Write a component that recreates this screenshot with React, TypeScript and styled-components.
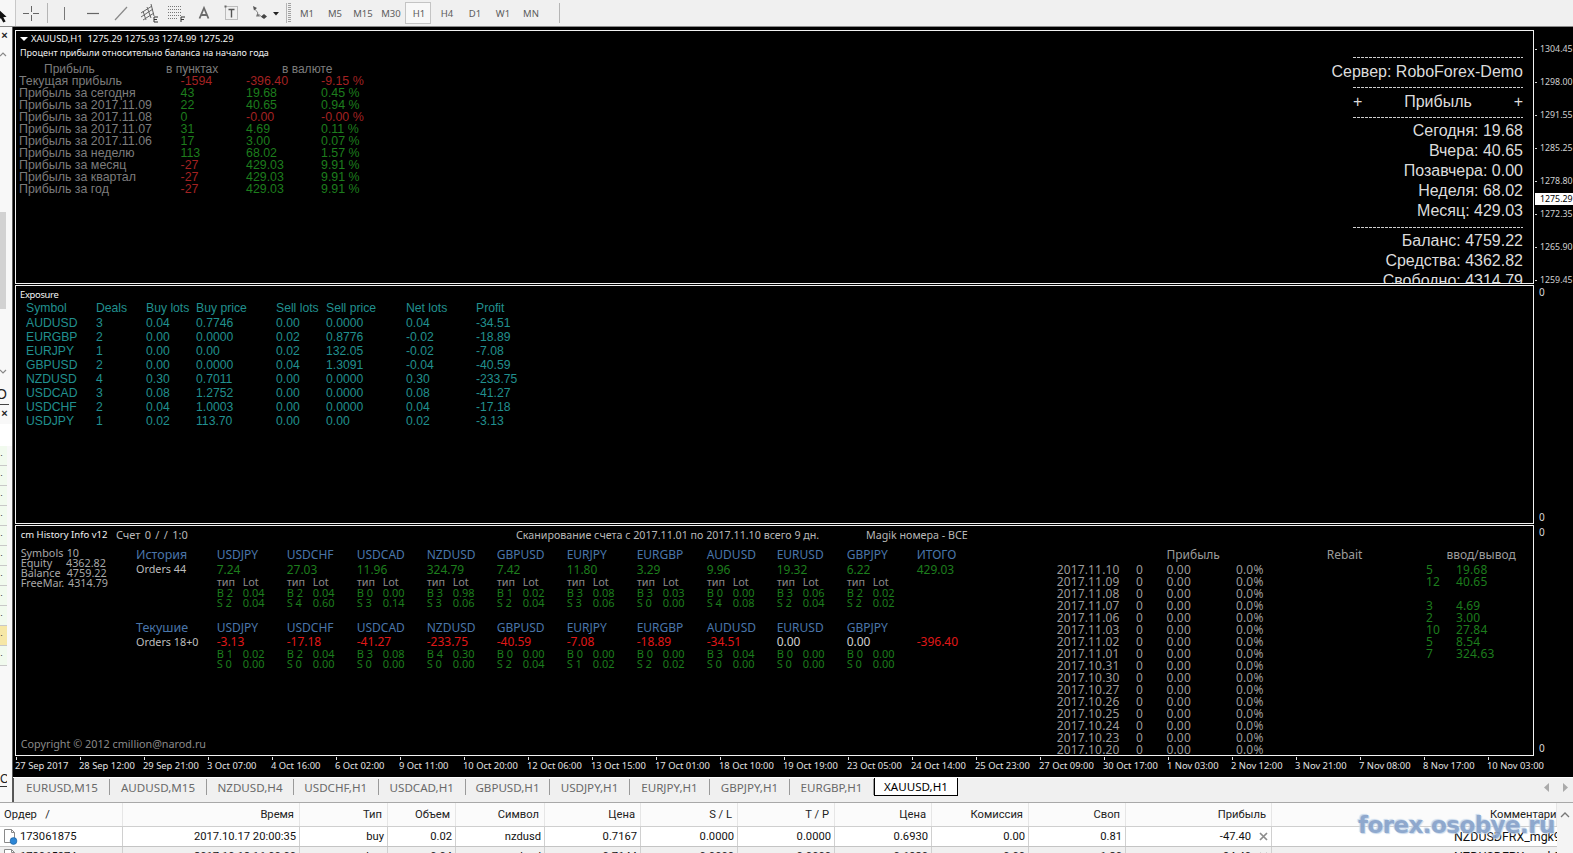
import React from "react";
import styled, { createGlobalStyle } from "styled-components";

const Global = createGlobalStyle`
  html, body { margin: 0; padding: 0; background: #f0f0f0; overflow: hidden; }
  #root { width: 1573px; height: 853px; overflow: hidden; }
`;

const UI = `"Noto Sans", "Liberation Sans", sans-serif`;
const ARIAL = `"Liberation Sans", Arial, sans-serif`;
const GREEN = "#1d7d1d";
const DARKRED = "#a32222";

const Page = styled.div`
  width: 1573px;
  height: 853px;
  display: flex;
  flex-direction: column;
  overflow: hidden;
  position: relative;
  font-family: ${UI};
`;

/* ---------- toolbar ---------- */
const Toolbar = styled.div`
  height: 26px;
  border-bottom: 1px solid #8a8a8a;
  background: #f0f0f0;
  display: flex;
  align-items: center;
  flex: none;
`;
const ToolButton = styled.div<{ $w: number; $on?: boolean }>`
  width: ${(p) => p.$w}px;
  height: 26px;
  flex: none;
  display: flex;
  align-items: center;
  justify-content: center;
  box-sizing: border-box;
  background: ${(p) => (p.$on ? "#f7f7f7" : "transparent")};
  border-right: ${(p) => (p.$on ? "1px solid #c8c8c8" : "0")};
`;
const ToolSep = styled.div<{ $ml?: number }>`
  width: 1px;
  height: 20px;
  background: #b5b5b5;
  margin-left: ${(p) => p.$ml ?? 0}px;
  flex: none;
`;
const Grip = styled.div`
  width: 3px;
  height: 20px;
  margin: 0 2px 0 1px;
  flex: none;
  background: repeating-linear-gradient(to bottom, #a0a0a0 0 1px, transparent 1px 2px);
`;
const TfButton = styled.div<{ $on?: boolean }>`
  width: 28px;
  height: 26px;
  flex: none;
  display: flex;
  align-items: center;
  justify-content: center;
  font-size: 9.5px;
  color: #5c5c5c;
  position: relative;
  z-index: 0;
  ${(p) =>
    p.$on
      ? `&::before{content:"";position:absolute;z-index:-1;left:0;right:2px;top:2px;bottom:2px;background:#f8f8f8;border:1px solid #c4c4c4;box-sizing:border-box;}`
      : ""}
`;

/* ---------- middle ---------- */
const Middle = styled.div`
  display: flex;
  flex: none;
  height: 775px;
`;
const Sidebar = styled.div`
  width: 12px;
  flex: none;
  background: #f8f8f8;
  border-right: 1px solid #5a5a5a;
  display: flex;
  flex-direction: column;
  overflow: hidden;
  color: #222;
`;
const SideClose = styled.div`
  height: 17px;
  font: bold 11px/17px ${ARIAL};
  text-align: center;
  width: 9px;
  flex: none;
`;
const SideChevron = styled.div<{ $mt: number }>`
  height: 9px;
  margin-top: ${(p) => p.$mt}px;
  flex: none;
  display: flex;
  justify-content: flex-start;
`;
const SideThumb = styled.div`
  width: 6px;
  height: 97px;
  margin-top: 153px;
  background: #d2d2d2;
  flex: none;
`;
const SideLetter = styled.div`
  height: 15px;
  font: 14px/15px ${ARIAL};
  margin-top: 11px;
  margin-left: -4px;
  color: #222;
  flex: none;
`;
const SideRule = styled.div<{ $mt?: number }>`
  height: 1px;
  background: #444;
  margin-top: ${(p) => p.$mt ?? 0}px;
  margin-right: 3px;
  flex: none;
`;
const SideGap = styled.div<{ $h: number; $bg?: string }>`
  height: ${(p) => p.$h}px;
  flex: none;
  background: ${(p) => p.$bg ?? "transparent"};
`;
const ListRow = styled.div<{ $bg: string }>`
  height: 19px;
  border-bottom: 1px solid #c8c8c8;
  background: ${(p) => p.$bg};
  width: 7px;
  flex: none;
  font: 9px/19px ${ARIAL};
  color: #333;
`;
const SideTab = styled.div`
  height: 14px;
  font: 12px/14px ${ARIAL};
  color: #222;
  border-bottom: 1px solid #333;
  width: 7px;
  overflow: hidden;
  flex: none;
  margin-top: auto;
  margin-bottom: 15px;
`;

const RightCol = styled.div`
  flex: 1;
  display: flex;
  flex-direction: column;
  min-width: 0;
`;
const Workspace = styled.div`
  height: 751px;
  flex: none;
  box-sizing: border-box;
  background: #000;
  padding: 3px 0 0 2px;
  display: flex;
  flex-direction: column;
  gap: 1px;
`;
const ChartRow = styled.div<{ $h: number }>`
  height: ${(p) => p.$h}px;
  display: flex;
  flex: none;
`;
const Panel = styled.div`
  width: 1519px;
  flex: none;
  box-sizing: border-box;
  border: 1px solid #f2f2f2;
  background: #000;
  overflow: hidden;
  display: flex;
  position: relative;
`;

/* price scale */
const Scale = styled.div`
  flex: 1;
  position: relative;
  box-sizing: border-box;
  padding-top: 3px;
  color: #d0d0d0;
  font: 8.8px ${UI};
`;
const PriceLabel = styled.div`
  height: 33px;
  line-height: 33px;
  padding-left: 6px;
  position: relative;
  white-space: nowrap;
  &::before {
    content: "";
    position: absolute;
    left: 1px;
    top: 16px;
    width: 2px;
    height: 1px;
    background: #d0d0d0;
  }
`;
const PriceNow = styled.div`
  position: absolute;
  left: 1px;
  right: 0;
  top: 163px;
  height: 12px;
  background: #fff;
  color: #000;
  font: 8.8px/12px ${UI};
  padding-left: 5px;
  white-space: nowrap;
`;
const ZeroScale = styled.div<{ $pt: number; $pb: number }>`
  flex: 1;
  box-sizing: border-box;
  padding: ${(p) => p.$pt}px 0 ${(p) => p.$pb}px 5px;
  display: flex;
  flex-direction: column;
  justify-content: space-between;
  color: #d8d8d8;
  font: 10px/12px ${UI};
`;

/* panel 1 */
const ProfitSide = styled.div`
  flex: 1;
  padding: 1px 0 0 3px;
`;
const ChartTitle = styled.div`
  height: 14px;
  font: 9.4px/14px ${UI};
  color: #f4f4f4;
  white-space: pre;
  display: flex;
  align-items: center;
`;
const TitleArrow = styled.span`
  width: 0;
  height: 0;
  border-left: 4px solid transparent;
  border-right: 4px solid transparent;
  border-top: 4px solid #fff;
  margin: 0 3px 0 1px;
`;
const Subtitle = styled.div`
  height: 13px;
  font: 9px/13px ${UI};
  color: #f0f0f0;
  white-space: pre;
  padding-left: 1px;
`;
const ProfitHead = styled.div`
  display: grid;
  grid-template-columns: 122px 116px 100px;
  margin: 4px 0 0 25px;
  height: 12px;
  font: 12px/12px ${ARIAL};
  color: #7c7c7c;
`;
const ProfitGrid = styled.div`
  display: grid;
  grid-template-columns: 161.5px 65.5px 75px 80px;
  grid-auto-rows: 12px;
  font: 12.4px/12px ${ARIAL};
`;
const ProfitCell = styled.div<{ $c: string }>`
  color: ${(p) => p.$c};
  white-space: pre;
`;
const Summary = styled.div`
  width: 170px;
  margin-right: 10px;
  padding-top: 21px;
  flex: none;
  font: 16px/20px ${ARIAL};
  color: #dcdcdc;
`;
const SumDash = styled.div<{ $mt?: number; $mb?: number }>`
  height: 10px;
  margin-top: ${(p) => p.$mt ?? 0}px;
  margin-bottom: ${(p) => p.$mb ?? 0}px;
  position: relative;
  &::after {
    content: "";
    position: absolute;
    left: 0;
    right: 0;
    top: 5px;
    height: 1px;
    background: repeating-linear-gradient(to right, #cfcfcf 0 3px, transparent 3px 4px);
  }
`;
const SumLine = styled.div`
  height: 20px;
  white-space: pre;
  display: flex;
  justify-content: flex-end;
`;
const SumHead = styled.div`
  height: 20px;
  display: flex;
  align-items: center;
  justify-content: space-between;
`;

/* panel 2 */
const ExposureBody = styled.div`
  flex: 1;
  padding: 2px 0 0 4px;
`;
const MiniTitle = styled.div`
  height: 13px;
  font: 9.4px/14px ${UI};
  letter-spacing: -0.3px;
  color: #f4f4f4;
`;
const ExposureGrid = styled.div`
  display: grid;
  grid-template-columns: 70px 50px 50px 80px 50px 80px 70px 80px;
  grid-template-rows: 15px;
  grid-auto-rows: 14px;
  margin-left: 6px;
  font: 12.2px/14px ${ARIAL};
  color: #21908f;
`;

/* panel 3 */
const HistoryPanel = styled.div`
  flex: 1;
  display: flex;
  flex-direction: column;
  min-width: 0;
`;
const HistoryHeader = styled.div`
  display: grid;
  grid-template-columns: 95.3px 400px 350px 120px;
  height: 14px;
  margin-top: 2px;
  padding-left: 4.7px;
  font: 10.7px/14px ${UI};
  color: #b8b8b8;
  flex: none;
  white-space: nowrap;
`;
const HistoryApp = styled.div`
  color: #f2f2f2;
  font-size: 9.5px;
`;
const AccountTitle = styled.div`
  font-size: 11px;
  word-spacing: 1.5px;
`;
const HistoryBody = styled.div`
  flex: 1;
  display: flex;
  min-height: 0;
  padding: 6px 0 0 4.7px;
`;
const LeftPart = styled.div`
  width: 1036px;
  flex: none;
  display: flex;
  flex-direction: column;
`;
const TopPart = styled.div`
  display: flex;
  flex: 1;
`;
const AccountBlock = styled.div`
  width: 115.3px;
  flex: none;
`;
const AccountLine = styled.div<{ $col: number }>`
  display: grid;
  grid-template-columns: ${(p) => p.$col}px auto;
  height: 10px;
  font: 10.8px/10px ${UI};
  color: #a8a8a8;
`;
const Groups = styled.div`
  display: flex;
  flex-direction: column;
  gap: 13px;
`;
const OrderGroup = styled.div`
  display: flex;
`;
const GroupLead = styled.div`
  width: 80.7px;
  flex: none;
`;
const LeadTitle = styled.div`
  height: 14px;
  font: 12.5px/14px ${UI};
  color: #4a76aa;
`;
const LeadSub = styled.div`
  height: 14px;
  font: 10.8px/14px ${UI};
  color: #bdbdbd;
`;
const SymColumn = styled.div`
  width: 70px;
  flex: none;
`;
const SymName = styled.div`
  height: 14px;
  font: 12px/14px ${UI};
  color: #4a76aa;
`;
const SymValue = styled.div<{ $c: string; $h: number }>`
  height: ${(p) => p.$h}px;
  font: 12px/${(p) => p.$h}px ${UI};
  color: ${(p) => p.$c};
`;
const TypeRow = styled.div`
  display: grid;
  grid-template-columns: 26px auto;
  height: 12px;
  margin-top: -1px;
  font: 10.8px/12px ${UI};
  color: #8c8c8c;
`;
const TradeRow = styled.div`
  display: grid;
  grid-template-columns: 26px auto;
  height: 10px;
  font: 11px/10px ${UI};
  color: ${GREEN};
`;
const Copyright = styled.div`
  height: 14px;
  margin-bottom: 4px;
  font: 10.8px/14px ${UI};
  color: #8a8a8a;
  flex: none;
`;
const DayTable = styled.div`
  display: grid;
  grid-template-columns: 79.3px 30.5px 69.5px 90.7px 99.3px 30px 80px;
  grid-template-rows: 16px;
  grid-auto-rows: 12px;
  font: 12px/14px ${UI};
  color: #9c9c9c;
  flex: none;
`;
const DayHead = styled.div<{ $span?: number; $pl?: number }>`
  grid-column: span ${(p) => p.$span ?? 1};
  padding-left: ${(p) => p.$pl ?? 0}px;
  white-space: nowrap;
`;
const DayCell = styled.div<{ $green?: boolean }>`
  color: ${(p) => (p.$green ? GREEN : "#9c9c9c")};
  letter-spacing: 0.15px;
  line-height: 12px;
`;

/* time axis */
const AxisRow = styled.div`
  display: flex;
  height: 20px;
  margin-left: -2px;
  padding-left: 2px;
  border-bottom: 1px solid #fff;
  flex: none;
  overflow: hidden;
`;
const AxisItem = styled.div`
  width: 64px;
  flex: none;
  box-sizing: border-box;
  position: relative;
  padding-top: 3px;
  font: 9.4px/12px ${UI};
  color: #e2e2e2;
  white-space: nowrap;
  &::before {
    content: "";
    position: absolute;
    left: 1px;
    top: 0;
    width: 1px;
    height: 3px;
    background: #e2e2e2;
  }
`;

/* tabs */
const TabBar = styled.div`
  height: 24px;
  flex: none;
  background: #f0f0f0;
  display: flex;
  padding-left: 1px;
  position: relative;
  border-left: 1px solid #555;
`;
const Tab = styled.div<{ $w: number; $active?: boolean }>`
  width: ${(p) => p.$w}px;
  flex: none;
  box-sizing: border-box;
  height: ${(p) => (p.$active ? "18px" : "16px")};
  margin-top: ${(p) => (p.$active ? "0" : "1px")};
  display: flex;
  align-items: center;
  justify-content: center;
  font-size: 11.6px;
  color: ${(p) => (p.$active ? "#000" : "#6a6a6a")};
  background: ${(p) => (p.$active ? "#fff" : "transparent")};
  border-right: 1px solid ${(p) => (p.$active ? "#000" : "#9a9a9a")};
  ${(p) => (p.$active ? "border-left:1px solid #000;border-bottom:1px solid #000;" : "")}
`;
const TabArrows = styled.div`
  position: absolute;
  right: 5px;
  top: 5px;
  display: flex;
  gap: 14px;
`;

/* orders */
const TABLE_FONT = `Roboto, "Noto Sans", sans-serif`;
const OrdersTable = styled.div`
  flex: none;
  height: 51px;
  background: #fff;
  overflow: hidden;
  display: flex;
  border-top: 1px solid #a8a8a8;
  box-sizing: border-box;
  font-family: ${TABLE_FONT};
`;
const OrdersMain = styled.div`
  width: 1557px;
  flex: none;
  overflow: hidden;
`;
const Tr = styled.div<{ $h: number; $bg: string; $line: string }>`
  display: grid;
  grid-template-columns: 123px 177px 88px 68px 89px 96px 97px 97px 97px 97px 97px 146px 285px;
  height: ${(p) => p.$h}px;
  box-sizing: border-box;
  background: ${(p) => p.$bg};
  border-bottom: 1px solid ${(p) => p.$line};
`;
const Th = styled.div<{ $pl?: number }>`
  box-sizing: border-box;
  border-right: 1px solid #e6e6e6;
  font-size: 11.2px;
  line-height: 23px;
  color: #222;
  text-align: ${(p) => (p.$pl !== undefined ? "left" : "right")};
  padding: ${(p) => (p.$pl !== undefined ? `0 0 0 ${p.$pl}px` : "0 5px 0 0")};
  white-space: nowrap;
  overflow: hidden;
`;
const Td = styled.div`
  box-sizing: border-box;
  border-right: 1px solid #d0d0d0;
  font-size: 11.2px;
  line-height: 19px;
  color: #111;
  padding-right: 3px;
  white-space: nowrap;
  overflow: hidden;
  display: flex;
  justify-content: flex-end;
  align-items: center;
  gap: 8px;
`;
const TdId = styled(Td)`
  justify-content: flex-start;
  padding-left: 2px;
  gap: 2px;
`;
const TdComment = styled(Td)`
  justify-content: flex-start;
  padding-left: 182px;
  font-size: 12.4px;
  border-right: 0;
`;
const ScrollCol = styled.div`
  width: 16px;
  flex: 1;
  background: #f4f4f4;
  display: flex;
  justify-content: center;
  padding-top: 8px;
  box-sizing: border-box;
`;
const Watermark = styled.div`
  position: absolute;
  left: 1358px;
  top: 810px;
  font: bold 23px/30px "DejaVu Sans", sans-serif;
  letter-spacing: -0.55px;
  color: #86a2ca;
  opacity: 0.92;
  text-shadow: 1px 1px 1px #c4d6ea, -1px -1px 1px #c4d6ea;
  white-space: nowrap;
`;

/* ---------- icons ---------- */
const I = ({ w = 18, h = 18, children }: { w?: number; h?: number; children: React.ReactNode }) => (
  <svg width={w} height={h} viewBox={`0 0 ${w} ${h}`} fill="none" stroke="#777" strokeWidth="1">
    {children}
  </svg>
);

const IconCursor = () => (
  <svg width="16" height="26" viewBox="0 0 16 26">
    <path d="M-3 8 L7 17 L3.5 17.5 L6 22 L3.5 23 L1 18.5 L-3 21 Z" fill="#111" />
  </svg>
);
const IconCross = () => (
  <I>
    <path d="M1 9.5h6M11 9.5h6M9.5 2v6M9.5 11v6" stroke="#666" />
  </I>
);
const IconVLine = () => (
  <I>
    <path d="M9.5 3v13" stroke="#777" />
  </I>
);
const IconHLine = () => (
  <I>
    <path d="M3 9.5h12" stroke="#666" strokeWidth="1.2" />
  </I>
);
const IconTrend = () => (
  <I w={16} h={18}>
    <path d="M2 16L14 3" stroke="#888" strokeWidth="1.2" />
  </I>
);
const IconChannel = () => (
  <svg width="20" height="20" viewBox="0 0 20 20" fill="none" stroke="#666">
    <path d="M1 10L12 3M1 14L13 6M3 17L14 10M3 8l3 9M7 4l4 11M11 1l3 12" />
    <path d="M14 14h4M14 14v5M14 16.5h3M14 19h4" stroke="#333" />
  </svg>
);
const IconFibo = () => (
  <svg width="20" height="20" viewBox="0 0 20 20" fill="none" stroke="#777" strokeDasharray="1 1">
    <path d="M1 3.5h13M1 6.5h13M1 9.5h13M1 12.5h13M1 15.5h10" />
    <path d="M14 14h4M14 14v5M14 16.5h3" stroke="#333" strokeDasharray="none" />
  </svg>
);
const IconA = () => (
  <svg width="14" height="16" viewBox="0 0 14 16" fill="none" stroke="#6c6c6c" strokeWidth="1.8">
    <path d="M2.5 13.5L7 3l4.5 10.5M4 10h6" />
  </svg>
);
const IconT = () => (
  <svg width="16" height="18" viewBox="0 0 16 18" fill="none">
    <rect x="1.5" y="2.5" width="12" height="13" stroke="#888" strokeDasharray="1 1" />
    <rect x="0.5" y="1.5" width="2" height="2" fill="#666" />
    <path d="M4.5 5.5h6M7.5 5.5v8" stroke="#555" strokeWidth="1.4" />
  </svg>
);
const IconArrows = () => (
  <svg width="32" height="18" viewBox="0 0 32 18">
    <path d="M10 9L6 4" stroke="#888" fill="none" />
    <path d="M5 2l4 2-3 2.5z" fill="#555" />
    <path d="M15 14l-4-3.5" stroke="#888" fill="none" />
    <path d="M9.5 8.5l2.5 4-4 0z" fill="#777" />
    <path d="M16 10l3 2.5-3 2.5-3-2.5z" fill="#444" />
    <path d="M25 8h6l-3 3.5z" fill="#222" />
  </svg>
);
const IconChevron = ({ up }: { up?: boolean }) => (
  <svg width="7" height="9" viewBox="0 0 7 9" fill="none" stroke="#888" strokeWidth="1.2">
    <path d={up ? "M0 6l3-3 3 3" : "M0 3l3 3 3-3"} />
  </svg>
);
const IconDoc = () => (
  <svg width="16" height="17" viewBox="0 0 16 17" fill="none">
    <path d="M2.5 1.5h7l3 3v10h-10z" fill="#fff" stroke="#8a8a8a" />
    <path d="M9.5 1.5v3h3" stroke="#8a8a8a" />
    <circle cx="11.5" cy="13" r="3.4" fill="#2c86d6" stroke="#1a5d9a" strokeWidth="0.6" />
  </svg>
);
const IconX = () => (
  <svg width="9" height="9" viewBox="0 0 9 9" stroke="#8c8c8c" strokeWidth="1.7">
    <path d="M1 1l7 7M8 1l-7 7" />
  </svg>
);
const IconTri = ({ dir }: { dir: "l" | "r" }) => (
  <svg width="5" height="9" viewBox="0 0 5 9">
    <path d={dir === "l" ? "M5 0v9L0 4.5z" : "M0 0v9l5-4.5z"} fill="#aaa" />
  </svg>
);
const IconCaret = () => (
  <svg width="10" height="8" viewBox="0 0 10 8" fill="none" stroke="#777" strokeWidth="1.3">
    <path d="M1 6l4-4 4 4" />
  </svg>
);

/* ---------- data ---------- */
const TF = ["M1", "M5", "M15", "M30", "H1", "H4", "D1", "W1", "MN"];
const PRICES = ["1304.45", "1298.00", "1291.55", "1285.25", "1278.80", "1272.35", "1265.90", "1259.45"];

type ProfitRow = [string, string, string, string, boolean, boolean, boolean];
const PROFIT: ProfitRow[] = [
  ["Текущая прибыль", "-1594", "-396.40", "-9.15 %", false, false, false],
  ["Прибыль за сегодня", "43", "19.68", "0.45 %", true, true, true],
  ["Прибыль за 2017.11.09", "22", "40.65", "0.94 %", true, true, true],
  ["Прибыль за 2017.11.08", "0", "-0.00", "-0.00 %", true, false, false],
  ["Прибыль за 2017.11.07", "31", "4.69", "0.11 %", true, true, true],
  ["Прибыль за 2017.11.06", "17", "3.00", "0.07 %", true, true, true],
  ["Прибыль за неделю", "113", "68.02", "1.57 %", true, true, true],
  ["Прибыль за месяц", "-27", "429.03", "9.91 %", false, true, true],
  ["Прибыль за квартал", "-27", "429.03", "9.91 %", false, true, true],
  ["Прибыль за год", "-27", "429.03", "9.91 %", false, true, true],
];

const EXPOSURE = [
  ["Symbol", "Deals", "Buy lots", "Buy price", "Sell lots", "Sell price", "Net lots", "Profit"],
  ["AUDUSD", "3", "0.04", "0.7746", "0.00", "0.0000", "0.04", "-34.51"],
  ["EURGBP", "2", "0.00", "0.0000", "0.02", "0.8776", "-0.02", "-18.89"],
  ["EURJPY", "1", "0.00", "0.00", "0.02", "132.05", "-0.02", "-7.08"],
  ["GBPUSD", "2", "0.00", "0.0000", "0.04", "1.3091", "-0.04", "-40.59"],
  ["NZDUSD", "4", "0.30", "0.7011", "0.00", "0.0000", "0.30", "-233.75"],
  ["USDCAD", "3", "0.08", "1.2752", "0.00", "0.0000", "0.08", "-41.27"],
  ["USDCHF", "2", "0.04", "1.0003", "0.00", "0.0000", "0.04", "-17.18"],
  ["USDJPY", "1", "0.02", "113.70", "0.00", "0.00", "0.02", "-3.13"],
];

type Sym = [string, string, string, string, string, string];
const HISTORY: Sym[] = [
  ["USDJPY", "7.24", "B 2", "0.04", "S 2", "0.04"],
  ["USDCHF", "27.03", "B 2", "0.04", "S 4", "0.60"],
  ["USDCAD", "11.96", "B 0", "0.00", "S 3", "0.14"],
  ["NZDUSD", "324.79", "B 3", "0.98", "S 3", "0.06"],
  ["GBPUSD", "7.42", "B 1", "0.02", "S 2", "0.04"],
  ["EURJPY", "11.80", "B 3", "0.08", "S 3", "0.06"],
  ["EURGBP", "3.29", "B 3", "0.03", "S 0", "0.00"],
  ["AUDUSD", "9.96", "B 0", "0.00", "S 4", "0.08"],
  ["EURUSD", "19.32", "B 3", "0.06", "S 2", "0.04"],
  ["GBPJPY", "6.22", "B 2", "0.02", "S 2", "0.02"],
];
const CURRENT: Sym[] = [
  ["USDJPY", "-3.13", "B 1", "0.02", "S 0", "0.00"],
  ["USDCHF", "-17.18", "B 2", "0.04", "S 0", "0.00"],
  ["USDCAD", "-41.27", "B 3", "0.08", "S 0", "0.00"],
  ["NZDUSD", "-233.75", "B 4", "0.30", "S 0", "0.00"],
  ["GBPUSD", "-40.59", "B 0", "0.00", "S 2", "0.04"],
  ["EURJPY", "-7.08", "B 0", "0.00", "S 1", "0.02"],
  ["EURGBP", "-18.89", "B 0", "0.00", "S 2", "0.02"],
  ["AUDUSD", "-34.51", "B 3", "0.04", "S 0", "0.00"],
  ["EURUSD", "0.00", "B 0", "0.00", "S 0", "0.00"],
  ["GBPJPY", "0.00", "B 0", "0.00", "S 0", "0.00"],
];

const ACCOUNT: [string, string, number][] = [
  ["Symbols", "10", 46],
  ["Equity", "4362.82", 45.3],
  ["Balance", "4759.22", 46],
  ["FreeMar.", "4314.79", 47.3],
];

const DATES = [
  "2017.11.10", "2017.11.09", "2017.11.08", "2017.11.07", "2017.11.06", "2017.11.03", "2017.11.02", "2017.11.01",
  "2017.10.31", "2017.10.30", "2017.10.27", "2017.10.26", "2017.10.25", "2017.10.24", "2017.10.23", "2017.10.20",
];
const DEPOSITS: Record<number, [string, string]> = {
  0: ["5", "19.68"],
  1: ["12", "40.65"],
  3: ["3", "4.69"],
  4: ["2", "3.00"],
  5: ["10", "27.84"],
  6: ["5", "8.54"],
  7: ["7", "324.63"],
};

const TIMES = [
  "27 Sep 2017", "28 Sep 12:00", "29 Sep 21:00", "3 Oct 07:00", "4 Oct 16:00", "6 Oct 02:00", "9 Oct 11:00", "10 Oct 20:00",
  "12 Oct 06:00", "13 Oct 15:00", "17 Oct 01:00", "18 Oct 10:00", "19 Oct 19:00", "23 Oct 05:00", "24 Oct 14:00", "25 Oct 23:00",
  "27 Oct 09:00", "30 Oct 17:00", "1 Nov 03:00", "2 Nov 12:00", "3 Nov 21:00", "7 Nov 08:00", "8 Nov 17:00", "10 Nov 03:00",
];

const TABS: [string, number][] = [
  ["EURUSD,M15", 95],
  ["AUDUSD,M15", 97],
  ["NZDUSD,H4", 87],
  ["USDCHF,H1", 84.5],
  ["USDCAD,H1", 87.5],
  ["GBPUSD,H1", 84],
  ["USDJPY,H1", 80],
  ["EURJPY,H1", 80],
  ["GBPJPY,H1", 80],
  ["EURGBP,H1", 84],
];

const HEAD = ["Время", "Тип", "Объем", "Символ", "Цена", "S / L", "T / P", "Цена", "Комиссия", "Своп", "Прибыль"];
const ROW1 = ["2017.10.17 20:00:35", "buy", "0.02", "nzdusd", "0.7167", "0.0000", "0.0000", "0.6930", "0.00", "0.81"];
const ROW2 = ["2017.10.18 16:00:00", "buy", "0.04", "nzdusd", "0.7144", "0.0000", "0.0000", "0.6930", "0.00", "1.30"];

const SymbolBlock = ({ s, red, types }: { s: Sym; red?: boolean; types?: boolean }) => (
  <SymColumn>
    <SymName>{s[0]}</SymName>
    <SymValue $h={types ? 15 : 14} $c={red ? (s[1] === "0.00" ? "#cfcfcf" : "#e01818") : GREEN}>
      {s[1]}
    </SymValue>
    {types && (
      <TypeRow>
        <span>тип</span>
        <span>Lot</span>
      </TypeRow>
    )}
    <TradeRow>
      <span>{s[2]}</span>
      <span>{s[3]}</span>
    </TradeRow>
    <TradeRow>
      <span>{s[4]}</span>
      <span>{s[5]}</span>
    </TradeRow>
  </SymColumn>
);

export default function App() {
  return (
    <Page>
      <Global />
      <Toolbar>
        <ToolButton $w={16} $on>
          <IconCursor />
        </ToolButton>
        <ToolButton $w={30}>
          <IconCross />
        </ToolButton>
        <ToolSep $ml={1} />
        <ToolButton $w={32}>
          <IconVLine />
        </ToolButton>
        <ToolButton $w={26}>
          <IconHLine />
        </ToolButton>
        <ToolButton $w={30}>
          <IconTrend />
        </ToolButton>
        <ToolButton $w={28}>
          <IconChannel />
        </ToolButton>
        <ToolButton $w={26}>
          <IconFibo />
        </ToolButton>
        <ToolButton $w={28}>
          <IconA />
        </ToolButton>
        <ToolButton $w={28}>
          <IconT />
        </ToolButton>
        <ToolButton $w={36}>
          <IconArrows />
        </ToolButton>
        <ToolSep $ml={4} />
        <Grip />
        {TF.map((t) => (
          <TfButton key={t} $on={t === "H1"}>
            {t}
          </TfButton>
        ))}
        <ToolSep $ml={14} />
      </Toolbar>

      <Middle>
        <Sidebar>
          <SideClose>×</SideClose>
          <SideChevron $mt={6}>
            <IconChevron up />
          </SideChevron>
          <SideThumb />
          <SideChevron $mt={58}>
            <IconChevron />
          </SideChevron>
          <SideLetter>O</SideLetter>
          <SideRule $mt={2} />
          <SideClose>×</SideClose>
          <SideGap $h={2} />
          <SideGap $h={22} $bg="#fff" />
          {Array.from({ length: 11 }).map((_, i) => (
            <ListRow key={i} $bg={i === 9 ? "#f6e7a6" : "#f1faee"}>
              ·
            </ListRow>
          ))}
          <SideTab>C</SideTab>
        </Sidebar>

        <RightCol>
          <Workspace>
            <ChartRow $h={254}>
              <Panel>
                <ProfitSide>
                  <ChartTitle>
                    <TitleArrow />
                    {"XAUUSD,H1  1275.29 1275.93 1274.99 1275.29"}
                  </ChartTitle>
                  <Subtitle>Процент прибыли относительно баланса на начало года</Subtitle>
                  <ProfitHead>
                    <span>Прибыль</span>
                    <span>в пунктах</span>
                    <span>в валюте</span>
                  </ProfitHead>
                  <ProfitGrid>
                    {PROFIT.map((r) => (
                      <React.Fragment key={r[0]}>
                        <ProfitCell $c="#7c7c7c">{r[0]}</ProfitCell>
                        <ProfitCell $c={r[4] ? GREEN : DARKRED}>{r[1]}</ProfitCell>
                        <ProfitCell $c={r[5] ? GREEN : DARKRED}>{r[2]}</ProfitCell>
                        <ProfitCell $c={r[6] ? GREEN : DARKRED}>{r[3]}</ProfitCell>
                      </React.Fragment>
                    ))}
                  </ProfitGrid>
                </ProfitSide>
                <Summary>
                  <SumDash />
                  <SumLine>Сервер: RoboForex-Demo</SumLine>
                  <SumDash />
                  <SumHead>
                    <span>+</span>
                    <span>Прибыль</span>
                    <span>+</span>
                  </SumHead>
                  <SumDash $mb={-1} />
                  <SumLine>Сегодня: 19.68</SumLine>
                  <SumLine>Вчера: 40.65</SumLine>
                  <SumLine>Позавчера: 0.00</SumLine>
                  <SumLine>Неделя: 68.02</SumLine>
                  <SumLine>Месяц: 429.03</SumLine>
                  <SumDash $mt={1} $mb={-1} />
                  <SumLine>Баланс: 4759.22</SumLine>
                  <SumLine>Средства: 4362.82</SumLine>
                  <SumLine>Свободно: 4314.79</SumLine>
                </Summary>
              </Panel>
              <Scale>
                {PRICES.map((p) => (
                  <PriceLabel key={p}>{p}</PriceLabel>
                ))}
                <PriceNow>1275.29</PriceNow>
              </Scale>
            </ChartRow>

            <ChartRow $h={239}>
              <Panel>
                <ExposureBody>
                  <MiniTitle>Exposure</MiniTitle>
                  <ExposureGrid>
                    {EXPOSURE.flatMap((row, r) => row.map((c, i) => <div key={`${r}-${i}`}>{c}</div>))}
                  </ExposureGrid>
                </ExposureBody>
              </Panel>
              <ZeroScale $pt={1} $pb={1}>
                <span>0</span>
                <span>0</span>
              </ZeroScale>
            </ChartRow>

            <ChartRow $h={231}>
              <Panel>
                <HistoryPanel>
                  <HistoryHeader>
                    <HistoryApp>cm History Info v12</HistoryApp>
                    <AccountTitle>Счет 0 / / 1:0</AccountTitle>
                    <span>Сканирование счета с 2017.11.01 по 2017.11.10 всего 9 дн.</span>
                    <span>Magik номера - ВСЕ</span>
                  </HistoryHeader>
                  <HistoryBody>
                    <LeftPart>
                      <TopPart>
                        <AccountBlock>
                          {ACCOUNT.map(([k, v, col]) => (
                            <AccountLine key={k} $col={col}>
                              <span>{k}</span>
                              <span>{v}</span>
                            </AccountLine>
                          ))}
                        </AccountBlock>
                        <Groups>
                          <OrderGroup>
                            <GroupLead>
                              <LeadTitle>История</LeadTitle>
                              <LeadSub>Orders 44</LeadSub>
                            </GroupLead>
                            {HISTORY.map((s) => (
                              <SymbolBlock key={s[0]} s={s} types />
                            ))}
                            <SymColumn>
                              <SymName>ИТОГО</SymName>
                              <SymValue $h={16} $c={GREEN}>
                                429.03
                              </SymValue>
                            </SymColumn>
                          </OrderGroup>
                          <OrderGroup>
                            <GroupLead>
                              <LeadTitle>Текушие</LeadTitle>
                              <LeadSub>Orders 18+0</LeadSub>
                            </GroupLead>
                            {CURRENT.map((s) => (
                              <SymbolBlock key={s[0]} s={s} red />
                            ))}
                            <SymColumn>
                              <SymName>{"\u00a0"}</SymName>
                              <SymValue $h={14} $c="#e01818">
                                -396.40
                              </SymValue>
                            </SymColumn>
                          </OrderGroup>
                        </Groups>
                      </TopPart>
                      <Copyright>Copyright © 2012 cmillion@narod.ru</Copyright>
                    </LeftPart>
                    <DayTable>
                      <DayHead />
                      <DayHead />
                      <DayHead>Прибыль</DayHead>
                      <DayHead />
                      <DayHead>Rebait</DayHead>
                      <DayHead $span={2} $pl={20.5}>
                        ввод/вывод
                      </DayHead>
                      {DATES.map((d, i) => (
                        <React.Fragment key={d}>
                          <DayCell>{d}</DayCell>
                          <DayCell>0</DayCell>
                          <DayCell>0.00</DayCell>
                          <DayCell>0.0%</DayCell>
                          <DayCell />
                          <DayCell $green>{DEPOSITS[i]?.[0]}</DayCell>
                          <DayCell $green>{DEPOSITS[i]?.[1]}</DayCell>
                        </React.Fragment>
                      ))}
                    </DayTable>
                  </HistoryBody>
                </HistoryPanel>
              </Panel>
              <ZeroScale $pt={1} $pb={2}>
                <span>0</span>
                <span>0</span>
              </ZeroScale>
            </ChartRow>

            <AxisRow>
              {TIMES.map((t) => (
                <AxisItem key={t}>{t}</AxisItem>
              ))}
            </AxisRow>
          </Workspace>

          <TabBar>
            {TABS.map(([t, w]) => (
              <Tab key={t} $w={w}>
                {t}
              </Tab>
            ))}
            <Tab $w={84} $active>
              XAUUSD,H1
            </Tab>
            <TabArrows>
              <IconTri dir="l" />
              <IconTri dir="r" />
            </TabArrows>
          </TabBar>
        </RightCol>
      </Middle>

      <OrdersTable>
        <OrdersMain>
          <Tr $h={24} $bg="#fbfbfb" $line="#cfcfcf">
            <Th $pl={4}>Ордер &nbsp; /</Th>
            {HEAD.map((h, i) => (
              <Th key={i}>{h}</Th>
            ))}
            <Th $pl={218}>Комментарий</Th>
          </Tr>
          <Tr $h={20} $bg="#fff" $line="#c4c4c4">
            <TdId>
              <IconDoc />
              173061875
            </TdId>
            {ROW1.map((c, i) => (
              <Td key={i}>{c}</Td>
            ))}
            <Td>
              -47.40
              <IconX />
            </Td>
            <TdComment>NZDUSDFRX_mgk9</TdComment>
          </Tr>
          <Tr $h={20} $bg="#f0f0f0" $line="#c4c4c4">
            <TdId>
              <IconDoc />
              173065974
            </TdId>
            {ROW2.map((c, i) => (
              <Td key={i}>{c}</Td>
            ))}
            <Td>
              -94.40
              <IconX />
            </Td>
            <TdComment>NZDUSDFRX_mgk9</TdComment>
          </Tr>
        </OrdersMain>
        <ScrollCol>
          <IconCaret />
        </ScrollCol>
      </OrdersTable>
      <Watermark>forex.osobye.ru</Watermark>
    </Page>
  );
}
